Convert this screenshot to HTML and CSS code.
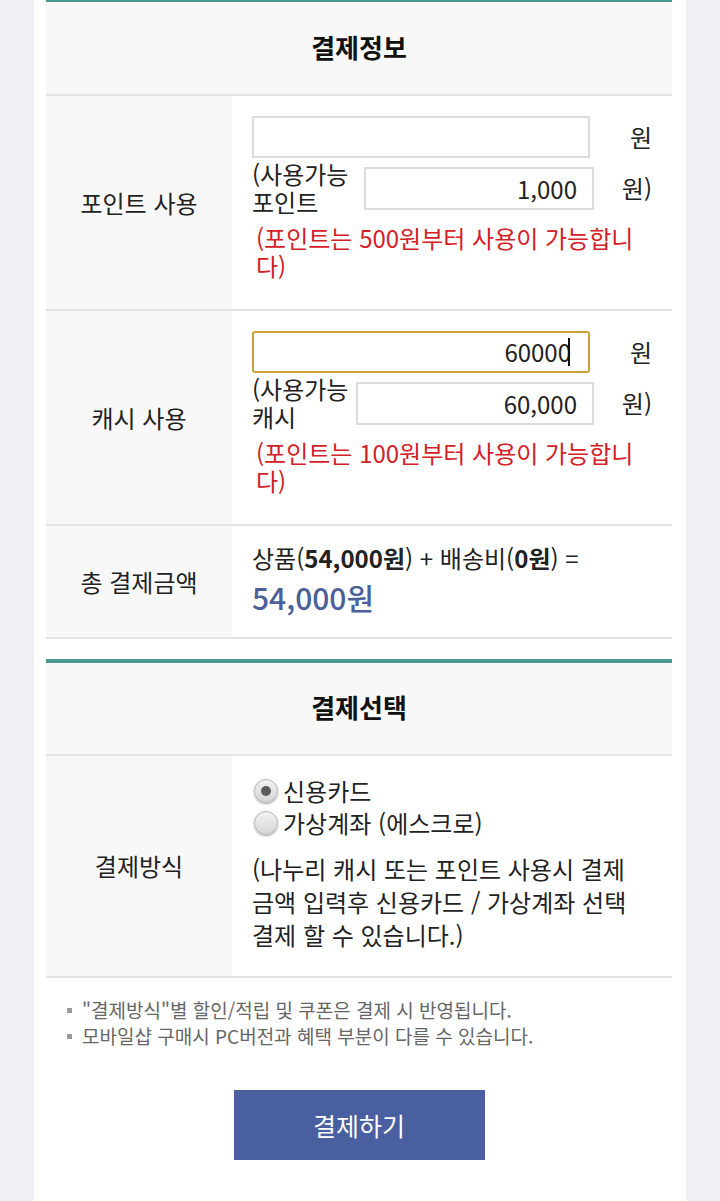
FILE: index.html
```html
<!DOCTYPE html>
<html lang="ko">
<head>
<meta charset="utf-8">
<title>결제정보</title>
<link rel="stylesheet" href="styles.css">
</head>
<body>
<div class="page">
  <section class="section section--first">
    <h2 class="section-title">결제정보</h2>
    <div class="row">
      <div class="row-label">포인트 사용</div>
      <div class="row-value">
        <div class="input-line">
          <input class="field field--main" type="text" value="">
          <span class="unit">원</span>
        </div>
        <div class="avail-line">
          <span class="avail-label avail-label--point">(사용가능 포인트</span>
          <input class="field field--avail field--avail-point" type="text" value="1,000" readonly>
          <span class="unit">원)</span>
        </div>
        <p class="warn">(포인트는 500원부터 사용이 가능합니다)</p>
      </div>
    </div>
    <div class="row">
      <div class="row-label">캐시 사용</div>
      <div class="row-value">
        <div class="input-line">
          <div class="field field--main is-focused"><span>60000</span><span class="caret"></span></div>
          <span class="unit">원</span>
        </div>
        <div class="avail-line">
          <span class="avail-label avail-label--cash">(사용가능 캐시</span>
          <input class="field field--avail field--avail-cash" type="text" value="60,000" readonly>
          <span class="unit">원)</span>
        </div>
        <p class="warn">(포인트는 100원부터 사용이 가능합니다)</p>
      </div>
    </div>
    <div class="row">
      <div class="row-label">총 결제금액</div>
      <div class="row-value row-value--total">
        <div class="total-line">상품(<b>54,000원</b>) + 배송비(<b>0원</b>) =</div>
        <div class="total-amount">54,000원</div>
      </div>
    </div>
  </section>

  <section class="section section--second">
    <h2 class="section-title section-title--second">결제선택</h2>
    <div class="row">
      <div class="row-label">결제방식</div>
      <div class="row-value row-value--method">
        <label class="radio-line"><input class="radio" type="radio" name="pay" checked>신용카드</label>
        <label class="radio-line"><input class="radio" type="radio" name="pay">가상계좌 (에스크로)</label>
        <p class="method-note">(나누리 캐시 또는 포인트 사용시 결제 금액 입력후 신용카드 / 가상계좌 선택 결제 할 수 있습니다.)</p>
      </div>
    </div>
  </section>

  <ul class="notes">
    <li>"결제방식"별 할인/적립 및 쿠폰은 결제 시 반영됩니다.</li>
    <li>모바일샵 구매시 PC버전과 혜택 부분이 다를 수 있습니다.</li>
  </ul>

  <div class="actions">
    <button class="pay-button" type="button">결제하기</button>
  </div>
</div>
</body>
</html>
```

FILE: styles.css
```css
* {
  box-sizing: border-box;
}

html, body {
  margin: 0;
  padding: 0;
}

body {
  background: #eff0f5;
  font-family: "Noto Sans CJK KR", "Noto Sans", sans-serif;
  color: #222;
}

.page {
  width: 652px;
  min-height: 1201px;
  margin: 0 auto;
  padding: 0 14px 0 12px;
  background: #fff;
}

.section {
  border-top: 4px solid #4c9a8f;
}

.section--first {
  border-top-width: 2px;
}

.section--second {
  margin-top: 20px;
}

.section-title {
  margin: 0;
  height: 94px;
  display: flex;
  align-items: center;
  justify-content: center;
  padding-bottom: 4px;
  background: #f8f8f8;
  border-bottom: 2px solid #e4e4e4;
  font-size: 26px;
  font-weight: 700;
  color: #111;
}

.section-title--second {
  height: 93px;
}

.row {
  display: grid;
  grid-template-columns: 186px 1fr;
  border-bottom: 2px solid #e4e4e4;
}

.row-label {
  background: #f8f8f8;
  display: flex;
  align-items: center;
  justify-content: center;
  font-size: 24px;
  line-height: 28px;
  color: #222;
}

.row-value {
  padding: 20px 20px 29px 20px;
  font-size: 24px;
  line-height: 28px;
}

.input-line,
.avail-line {
  display: flex;
  align-items: center;
}

.input-line {
  height: 42px;
}

.avail-line {
  margin-top: 2px;
  min-height: 56px;
}

.unit {
  margin-left: auto;
  white-space: nowrap;
}

.field {
  font-family: inherit;
  font-size: 24px;
  color: #222;
  text-align: right;
  background: #fff;
  border: 2px solid #dcdcdc;
  border-radius: 0;
  outline: none;
  margin: 0;
}

.field--main {
  width: 338px;
  height: 42px;
  padding: 0 18px 0 10px;
}

.field--main.is-focused {
  display: flex;
  align-items: center;
  justify-content: flex-end;
  border-color: #c9a23e;
  border-radius: 3px;
  line-height: 28px;
}

.caret {
  display: inline-block;
  width: 2px;
  height: 28px;
  margin-left: -3px;
  background: #111;
}

.field--avail {
  height: 43px;
  padding: 0 15px 0 10px;
}

.avail-label {
  word-break: keep-all;
  line-height: 28px;
}

.avail-label--point {
  width: 112px;
}

.avail-label--cash {
  width: 104px;
}

.field--avail-point {
  width: 230px;
}

.field--avail-cash {
  width: 238px;
}

.warn {
  margin: 8px 0 0;
  padding: 0 16px 0 4px;
  color: #d42027;
  line-height: 28px;
}

.row-value--total {
  padding: 18px 20px 20px;
}

.total-line {
  line-height: 28px;
}

.total-line b {
  font-weight: 700;
}

.total-amount {
  margin-top: 5px;
  font-size: 30px;
  line-height: 40px;
  color: #4b5f99;
  font-weight: 500;
}

.row-value--method {
  padding: 19px 20px 25px;
  line-height: 32px;
}

.radio-line {
  display: flex;
  align-items: center;
  height: 32px;
}

.radio {
  appearance: none;
  -webkit-appearance: none;
  width: 24px;
  height: 24px;
  margin: 0 5px 0 2px;
  border-radius: 50%;
  border: 1px solid #b5b5b5;
  background: linear-gradient(#f2f2f2, #d6d6d6);
  box-shadow: 0 1px 2px rgba(0, 0, 0, 0.35);
  position: relative;
  flex: none;
}

.radio:checked::after {
  content: "";
  position: absolute;
  left: 6px;
  top: 6px;
  width: 10px;
  height: 10px;
  border-radius: 50%;
  background: #5c5c5c;
}

.method-note {
  margin: 13px 0 0;
  word-break: keep-all;
  line-height: 33px;
}

.notes {
  list-style: none;
  margin: 19px 0 0;
  padding: 0 0 0 21px;
  font-size: 19px;
  line-height: 26px;
  color: #666;
}

.notes li {
  display: flex;
  align-items: center;
}

.notes li::before {
  content: "";
  width: 5px;
  height: 5px;
  background: #9a9a9a;
  margin-right: 10px;
  flex: none;
}

.actions {
  display: flex;
  justify-content: center;
  margin-top: 41px;
}

.pay-button {
  width: 251px;
  height: 70px;
  border: 0;
  background: #4a5f9f;
  color: #fff;
  font-family: inherit;
  font-size: 25px;
  cursor: pointer;
}
```
